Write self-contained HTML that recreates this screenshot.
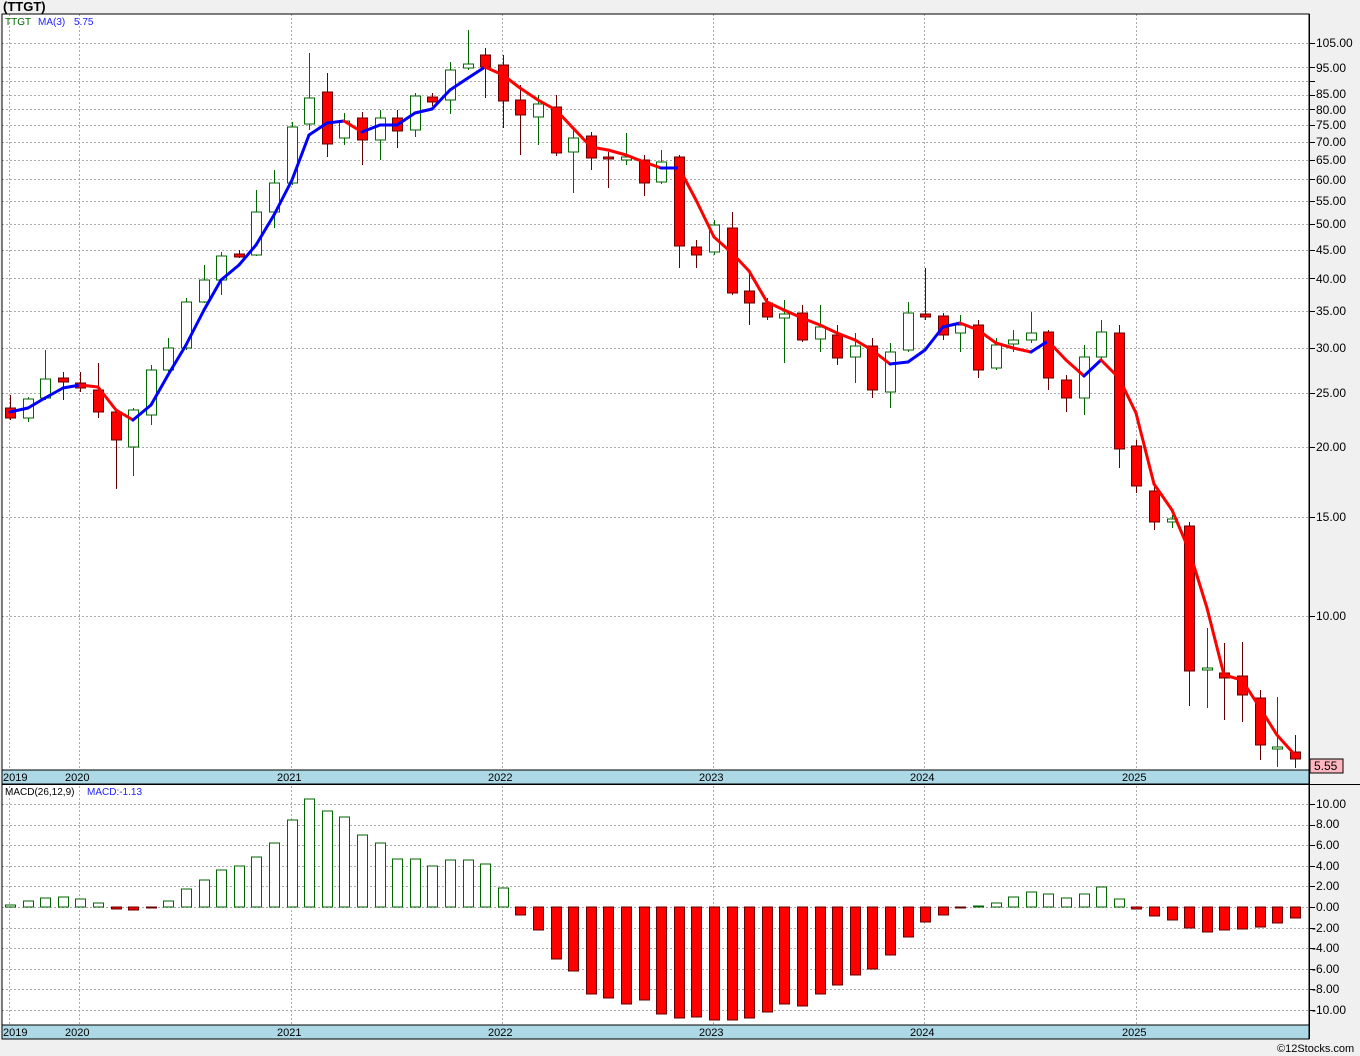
<!DOCTYPE html><html><head><style>
body{margin:0;background:#f0f0f0;width:1360px;height:1056px;overflow:hidden;font-family:"Liberation Sans",sans-serif}
svg{position:absolute;left:0;top:0}
</style></head><body>
<svg id="s" width="1360" height="1056" xmlns="http://www.w3.org/2000/svg" font-family="Liberation Sans, sans-serif">
<rect x="2" y="14" width="1307" height="1025" fill="#fff"/>
<g id="grid" stroke="#aaa" stroke-dasharray="2,2" stroke-width="1"></g>
<g id="c"></g>
<rect x="2" y="770" width="1307" height="14" fill="#add8e6" stroke="#000"/>
<rect x="2" y="1025" width="1307" height="14" fill="#add8e6" stroke="#000"/>
<rect x="2" y="14" width="1307" height="1025" fill="none" stroke="#000"/>
<line x1="2" y1="784.5" x2="1360" y2="784.5" stroke="#000"/>
<line x1="1309.5" y1="14" x2="1309.5" y2="1039" stroke="#000"/>
<text x="3" y="11" font-size="13" font-weight="bold">(TTGT)</text>
<text x="5" y="25" font-size="10" fill="#060">TTGT</text>
<text x="38" y="25" font-size="10" fill="#22f">MA(3)</text>
<text x="74" y="25" font-size="10" fill="#22f">5.75</text>
<text x="5" y="795" font-size="10">MACD(26,12,9)</text>
<text x="87" y="795" font-size="10" fill="#22f">MACD:-1.13</text>
<g font-size="11">
<text x="3" y="781">2019</text><text x="65" y="781">2020</text><text x="277" y="781">2021</text><text x="488" y="781">2022</text><text x="699" y="781">2023</text><text x="910" y="781">2024</text><text x="1122" y="781">2025</text>
<text x="3" y="1036">2019</text><text x="65" y="1036">2020</text><text x="277" y="1036">2021</text><text x="488" y="1036">2022</text><text x="699" y="1036">2023</text><text x="910" y="1036">2024</text><text x="1122" y="1036">2025</text>
</g>
<g font-size="12" id="pl">
<text x="1316" y="47">105.00</text><text x="1316" y="72">95.00</text><text x="1316" y="98">85.00</text><text x="1316" y="114">80.00</text><text x="1316" y="129">75.00</text><text x="1316" y="146">70.00</text><text x="1316" y="164">65.00</text><text x="1316" y="184">60.00</text><text x="1316" y="205">55.00</text><text x="1316" y="228">50.00</text><text x="1316" y="254">45.00</text><text x="1316" y="283">40.00</text><text x="1316" y="315">35.00</text><text x="1316" y="352">30.00</text><text x="1316" y="397">25.00</text><text x="1316" y="451">20.00</text><text x="1316" y="521">15.00</text><text x="1316" y="620">10.00</text>
<text x="1316" y="808">10.00</text><text x="1316" y="828">8.00</text><text x="1316" y="849">6.00</text><text x="1316" y="870">4.00</text><text x="1316" y="890">2.00</text><text x="1316" y="911">0.00</text><text x="1312" y="932">-2.00</text><text x="1312" y="952">-4.00</text><text x="1312" y="973">-6.00</text><text x="1312" y="993">-8.00</text><text x="1312" y="1014">-10.00</text>
</g>
<rect x="1310" y="759" width="33" height="14" fill="#ffb6c1" stroke="#000"/>
<text x="1314" y="770" font-size="12">5.55</text>
<text x="1277" y="1052" font-size="11">©12Stocks.com</text>
</svg>
<script>
var NS="http://www.w3.org/2000/svg",g=document.getElementById('grid'),c=document.getElementById('c');
function el(p,t,a){var e=document.createElementNS(NS,t);for(var k in a)e.setAttribute(k,a[k]);p.appendChild(e);return e}
[105,95,90,85,80,75,70,65,60,55,50,45,40,35,30,25,20,15,10].forEach(function(p){var y=Math.round(616-561*Math.log10(p/10))+.5;el(g,'line',{x1:2,x2:1309,y1:y,y2:y});el(c,'line',{x1:1309,x2:1315,y1:y,y2:y,stroke:'#000'})});
for(var k=-10;k<=10;k+=2){var y=Math.round(907-10.3*k)+.5;el(g,'line',{x1:2,x2:1309,y1:y,y2:y});el(c,'line',{x1:1309,x2:1315,y1:y,y2:y,stroke:'#000'})}
[9,79,291,502,713,924,1136].forEach(function(x){el(g,'line',{x1:x+.5,x2:x+.5,y1:14,y2:1025})});
var D=[[0,408,418,395,420],[1,399,418,397,422],[1,379,398,350,400],[0,378,382,372,400],[0,383,388,372,392],[0,390,412,363,418],[0,412,440,410,489],[1,410,447,408,476],[1,370,415,365,425],[1,348,370,338,372],[1,302,348,298,350],[1,280,302,265,303],[1,256,280,252,295],[0,254,257,250,258],[1,212,255,190,256],[1,183,212,170,228],[1,127,183,122,185],[1,98,124,53,130],[0,92,144,73,157],[1,121,138,113,145],[0,118,140,112,165],[1,118,140,110,160],[0,118,131,110,148],[1,96,130,93,137],[0,97,102,93,106],[1,70,100,62,114],[1,64,68,30,70],[0,55,67,48,98],[0,65,101,55,128],[0,100,115,85,155],[1,104,117,95,145],[0,107,153,95,156],[1,138,152,130,193],[0,136,158,132,170],[0,157,159,152,188],[1,157,160,133,165],[0,160,183,155,196],[1,162,182,150,184],[0,157,246,155,268],[0,247,255,240,268],[1,225,252,220,255],[0,228,293,212,295],[0,291,303,270,325],[0,303,317,298,320],[1,314,318,300,363],[0,313,340,305,342],[1,327,339,305,352],[0,335,358,325,365],[1,346,357,333,383],[0,346,390,338,398],[1,352,392,343,408],[1,313,350,302,352],[0,314,317,268,320],[0,316,335,313,340],[1,325,333,315,352],[0,325,370,320,378],[1,345,368,338,370],[1,340,344,330,352],[1,333,340,312,343],[0,332,378,330,390],[0,380,398,375,412],[1,357,398,345,415],[1,332,357,320,360],[0,333,449,325,468],[0,446,486,440,493],[0,491,522,486,530],[1,519,522,515,528],[0,526,671,522,706],[1,668,670,628,708],[0,673,678,643,720],[0,676,695,642,722],[0,698,745,690,760],[1,747,749,697,767],[0,752,759,735,768]];
var M=[0.2,0.6,0.9,1.0,0.8,0.4,-0.2,-0.3,-0.1,0.6,1.7,2.6,3.6,4.0,4.9,6.2,8.4,10.5,9.3,8.7,7.0,6.2,4.7,4.7,4.0,4.6,4.6,4.2,1.8,-0.8,-2.2,-5.0,-6.2,-8.4,-8.8,-9.4,-9.0,-10.4,-10.8,-10.7,-11,-11,-10.8,-10.2,-9.4,-9.6,-8.4,-7.6,-6.6,-6.0,-4.7,-2.9,-1.5,-0.8,-0.1,0.1,0.4,1.0,1.5,1.3,0.9,1.3,1.9,0.8,-0.2,-0.9,-1.3,-2.0,-2.4,-2.2,-2.1,-1.9,-1.6,-1.1];
var A=[412,408,398,388,385,387,410,420,405,375,345,310,280,265,245,215,180,135,123,121,132,125,125,113,109,90,78,67,75,88,100,110,128,147,150,155,162,168,168,200,237,253,271,302,310,318,325,333,340,350,364,362,350,327,323,330,343,348,352,341,360,376,360,378,413,484,510,550,608,675,680,708,735,755];
function X(i){return Math.round(10+17.6*i)}
D.forEach(function(d,i){var x=X(i)+.5,up=d[0];var col=up?'#060':'#600';
el(c,'line',{x1:x,x2:x,y1:d[3],y2:d[4],stroke:col});
el(c,'rect',{x:x-5,y:d[1],width:10,height:Math.max(2,d[2]-d[1]),fill:up?'#fff':'#f00',stroke:up?'#060':'#600'});
var v=M[i],y=Math.round(907-10.3*v),t=Math.min(y,907),h=Math.max(1,Math.abs(y-907));
el(c,'rect',{x:x-5,y:t,width:10,height:h,fill:v>=0?'#fff':'#f00',stroke:v>=0?'#060':'#600'});});
for(var i=0;i<A.length-1;i++){el(c,'line',{x1:X(i),y1:A[i],x2:X(i+1),y2:A[i+1],stroke:A[i+1]<=A[i]?'#00f':'#f00','stroke-width':3,'stroke-linecap':'round'})}
</script>
</body></html>
